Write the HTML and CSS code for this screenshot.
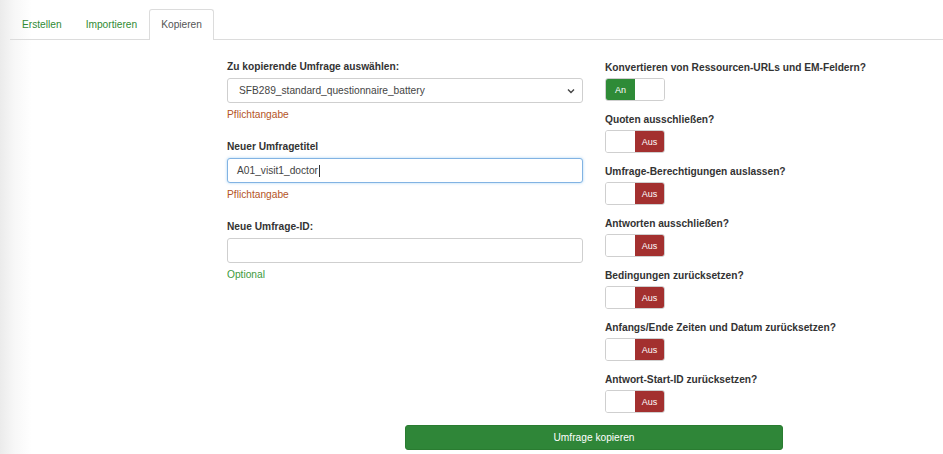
FILE: index.html
```html
<!DOCTYPE html>
<html lang="de">
<head>
<meta charset="utf-8">
<title>Umfrage kopieren</title>
<link rel="stylesheet" href="styles.css">
</head>
<body>
<div class="page">
  <ul class="tabs">
    <li class="tab"><a>Erstellen</a></li>
    <li class="tab"><a>Importieren</a></li>
    <li class="tab active"><a>Kopieren</a></li>
  </ul>

  <div class="form">
    <div class="col-left">
      <div class="group">
        <div class="label">Zu kopierende Umfrage auswählen:</div>
        <div class="control select">
          <span>SFB289_standard_questionnaire_battery</span>
          <svg class="chev" width="8" height="6" viewBox="0 0 8 6"><path d="M1 1.5 L4 4.5 L7 1.5" fill="none" stroke="#444" stroke-width="1.4"/></svg>
        </div>
        <div class="hint req">Pflichtangabe</div>
      </div>
      <div class="group">
        <div class="label">Neuer Umfragetitel</div>
        <div class="control focus"><span>A01_visit1_doctor</span><span class="caret"></span></div>
        <div class="hint req">Pflichtangabe</div>
      </div>
      <div class="group">
        <div class="label">Neue Umfrage-ID:</div>
        <div class="control"></div>
        <div class="hint opt">Optional</div>
      </div>
    </div>

    <div class="col-right">
      <div class="sw-group">
        <div class="label">Konvertieren von Ressourcen-URLs und EM-Feldern?</div>
        <div class="switch"><span class="on">An</span><span class="blank"></span></div>
      </div>
      <div class="sw-group">
        <div class="label">Quoten ausschließen?</div>
        <div class="switch"><span class="blank"></span><span class="off">Aus</span></div>
      </div>
      <div class="sw-group">
        <div class="label">Umfrage-Berechtigungen auslassen?</div>
        <div class="switch"><span class="blank"></span><span class="off">Aus</span></div>
      </div>
      <div class="sw-group">
        <div class="label">Antworten ausschließen?</div>
        <div class="switch"><span class="blank"></span><span class="off">Aus</span></div>
      </div>
      <div class="sw-group">
        <div class="label">Bedingungen zurücksetzen?</div>
        <div class="switch"><span class="blank"></span><span class="off">Aus</span></div>
      </div>
      <div class="sw-group">
        <div class="label">Anfangs/Ende Zeiten und Datum zurücksetzen?</div>
        <div class="switch"><span class="blank"></span><span class="off">Aus</span></div>
      </div>
      <div class="sw-group">
        <div class="label">Antwort-Start-ID zurücksetzen?</div>
        <div class="switch"><span class="blank"></span><span class="off">Aus</span></div>
      </div>
    </div>
  </div>

  <div class="actions">
    <button class="btn">Umfrage kopieren</button>
  </div>
</div>
</body>
</html>
```

FILE: styles.css
```css
html, body {
  margin: 0;
  padding: 0;
}
body {
  font-family: "Liberation Sans", Arial, sans-serif;
  font-size: 10.2px;
  color: #333;
  background: linear-gradient(to right, #ebebeb 0px, #f7f7f7 14px, #ffffff 32px) no-repeat;
  background-color: #fff;
  height: 454px;
  overflow: hidden;
}
.page {
  padding-top: 9px;
}
.tabs {
  list-style: none;
  margin: 0 0 0 10px;
  padding: 0;
  display: flex;
  border-bottom: 1px solid #dcdcdc;
  height: 30px;
}
.tab {
  margin-bottom: -1px;
}
.tab a {
  display: block;
  padding: 0 11px;
  height: 30px;
  line-height: 30px;
  color: #2f8a34;
  border: 1px solid transparent;
  border-bottom: none;
  box-sizing: border-box;
}
.tab.active a {
  color: #555;
  background: #fff;
  border-color: #dcdcdc;
  border-radius: 3px 3px 0 0;
  height: 31px;
}
.form {
  display: grid;
  grid-template-columns: 356px 338px;
  column-gap: 22px;
  margin: 20px 0 0 227px;
}
.label {
  font-weight: bold;
  line-height: 14px;
  color: #333;
}
.group {
  margin-bottom: 18px;
}
.group .label {
  margin-bottom: 4px;
}
.control {
  height: 25px;
  border: 1px solid #cfcfcf;
  border-radius: 3px;
  box-sizing: border-box;
  display: flex;
  align-items: center;
  padding: 0 9px;
  color: #444;
  font-size: 10.2px;
  background: #fff;
}
.select {
  padding-left: 11px;
  justify-content: space-between;
}
.chev {
  margin-right: -2px;
}
.focus {
  border-color: #82b3e3;
  box-shadow: 0 0 3px rgba(102, 175, 233, 0.55);
}
.caret {
  display: inline-block;
  width: 1px;
  height: 12px;
  background: #333;
  margin-left: 1px;
}
.hint {
  line-height: 14px;
  margin-top: 5px;
}
.req {
  color: #b4541f;
}
.opt {
  color: #3c9a3c;
}
.col-right {
  padding-top: 1px;
}
.sw-group {
  margin-bottom: 12px;
}
.sw-group .label {
  margin-bottom: 3px;
}
.switch {
  width: 60px;
  height: 23px;
  border: 1px solid #cfcfcf;
  border-radius: 3px;
  box-sizing: border-box;
  display: flex;
  overflow: hidden;
  font-size: 9px;
}
.switch span {
  flex: 1;
  display: flex;
  align-items: center;
  justify-content: center;
  color: #fff;
}
.switch .on {
  background: #2e8b37;
}
.switch .off {
  background: #a3302f;
}
.switch .blank {
  background: #fff;
}
.actions {
  margin: 0 0 0 405px;
}
.btn {
  width: 378px;
  height: 25px;
  border: 1px solid #2a7c31;
  border-radius: 3px;
  background: #2f8638;
  color: #fff;
  font-family: "Liberation Sans", Arial, sans-serif;
  font-size: 10.2px;
  padding: 0;
}
```
